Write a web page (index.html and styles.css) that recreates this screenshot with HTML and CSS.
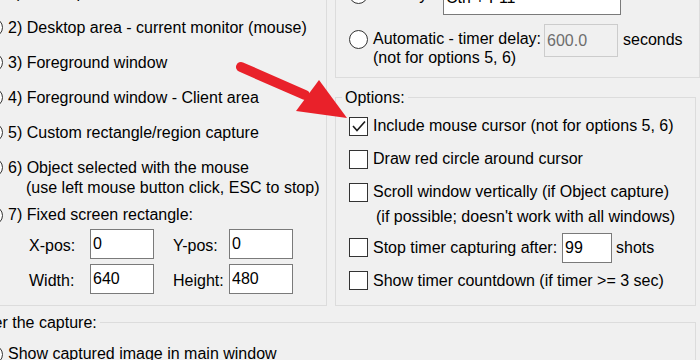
FILE: index.html
```html
<!DOCTYPE html>
<html lang="en">
<head>
  <meta charset="UTF-8" />
  <meta name="viewport" content="width=device-width, initial-scale=1.0">
  <title>Capture settings</title>
  <link rel="stylesheet" href="styles.css">
</head>
<body>
  <div class="dialog">
    <div class="top">
      <!-- Capture source -->
      <div class="group source">
        <div class="opt"><span class="radio"></span>1) Desktop area - all monitors</div>
        <div class="opt"><span class="radio"></span>2) Desktop area - current monitor (mouse)</div>
        <div class="opt"><span class="radio"></span>3) Foreground window</div>
        <div class="opt"><span class="radio"></span>4) Foreground window - Client area</div>
        <div class="opt"><span class="radio"></span>5) Custom rectangle/region capture</div>
        <div class="opt tall">
          <span class="radio"></span>
          <div>6) Object selected with the mouse<span class="cont">(use left mouse button click, ESC to stop)</span></div>
        </div>
        <div class="opt short"><span class="radio"></span>7) Fixed screen rectangle:</div>
        <div class="rect">
          <label>X-pos:</label><input class="field" value="0">
          <label class="y">Y-pos:</label><input class="field" value="0">
          <label>Width:</label><input class="field" value="640">
          <label class="y">Height:</label><input class="field" value="480">
        </div>
      </div>

      <div class="side">
        <!-- Capture trigger -->
        <div class="group trigger">
          <div class="hotkey">
            <span class="hk-choice"><span class="radio"></span><span class="hk-label">Hot key:</span></span>
            <input class="field hk-input" value="Ctrl + F11">
          </div>
          <div class="auto">
            <span class="radio"></span>
            <div class="desc">Automatic - timer delay:<br>(not for options 5, 6)</div>
            <input class="field delay" value="600.0" disabled>
            <span class="unit">seconds</span>
          </div>
        </div>

        <fieldset class="options">
          <legend>Options:</legend>
          <div class="check-row">
            <span class="box"><svg width="17" height="17" viewBox="0 0 17 17"><polyline points="3,8 7,12.5 15,3.5" fill="none" stroke="#1a1a1a" stroke-width="1.6"/></svg></span>
            Include mouse cursor (not for options 5, 6)
          </div>
          <div class="check-row"><span class="box"></span>Draw red circle around cursor</div>
          <div class="check-row"><span class="box"></span>Scroll window vertically (if Object capture)</div>
          <div class="note">(if possible; doesn't work with all windows)</div>
          <div class="check-row">
            <span class="box"></span>
            <span class="stop-label">Stop timer capturing after:</span>
            <input class="field shots" value="99">
            <span class="unit">shots</span>
          </div>
          <div class="check-row"><span class="box"></span>Show timer countdown (if timer &gt;= 3 sec)</div>
        </fieldset>
      </div>
    </div>

    <fieldset class="after">
      <legend>After the capture:</legend>
      <div class="opt"><span class="radio"></span>Show captured image in main window</div>
    </fieldset>
  </div>

  <svg class="arrow" width="700" height="360" viewBox="0 0 700 360">
    <line x1="241" y1="67" x2="305" y2="95" stroke="#e9212a" stroke-width="10" stroke-linecap="round"/>
    <polygon points="319,80 296,111 347,118" fill="#e9212a"/>
  </svg>
</body>
</html>
```

FILE: styles.css
```css
* {
  box-sizing: border-box;
}

body {
  margin: 0;
  height: 360px;
  overflow: hidden;
  position: relative;
  background: #f0f0f0;
  font-family: "Liberation Sans", Arial, sans-serif;
  font-size: 16px;
  color: #000;
}

/* the screenshot is a crop, so the dialog starts above and left of the view */
.dialog {
  width: 720px;
  margin: -40px 0 0 -20px;
}

.top {
  display: flex;
  align-items: flex-start;
  gap: 8px;
}

.group {
  border: 1px solid #dcdcdc;
}

fieldset {
  margin: 0;
  min-width: 0;
  border: 1px solid #dcdcdc;
}

legend {
  padding: 0 3px;
  margin-left: -7px;
  line-height: 20px;
}

.radio,
.box {
  flex: none;
  width: 19px;
  height: 19px;
  border: 1px solid #333;
  background: #fff;
}

.radio {
  border-radius: 50%;
}

.box svg {
  display: block;
}

.field {
  flex: none;
  height: 30px;
  padding: 0 2px;
  border: 1px solid #7a7a7a;
  background: #fff;
  font: inherit;
  color: #000;
  outline: none;
}

.unit {
  white-space: nowrap;
}

/* left column */
.source {
  width: 347px;
  padding: 14px 0 11px 3px;
}

.opt {
  display: flex;
  align-items: center;
  gap: 5px;
  height: 35px;
  line-height: 20px;
  white-space: nowrap;
}

.opt.tall {
  height: auto;
  align-items: flex-start;
  padding-top: 7.5px;
}

.opt.tall .radio {
  margin-top: 0.5px;
}

.cont {
  display: block;
  padding-left: 18px;
}

.opt.short {
  height: 27.5px;
  align-items: flex-end;
}

.rect {
  display: grid;
  grid-template-columns: 61px 64px 75px 64px;
  row-gap: 5px;
  align-items: center;
  margin: 4px 0 0 45px;
}

.rect label {
  padding-top: 3px;
}

.rect label.y {
  padding-left: 19px;
}

.rect .field {
  width: 64px;
}

/* right column */
.side {
  width: 365px;
}

.trigger {
  padding: 24px 0 10.5px 13px;
}

.hotkey {
  display: flex;
  align-items: center;
  height: 30px;
}

.hk-choice {
  display: flex;
  align-items: center;
  gap: 5px;
  margin-bottom: 11px;
  line-height: 19px;
}

.hk-label {
  width: 70px;
}

.hk-input {
  width: 178px;
  padding-bottom: 5px;
}

.auto {
  display: flex;
  align-items: flex-start;
  margin-top: 9px;
  line-height: 19px;
}

.auto .radio {
  margin-top: 5.5px;
}

.desc {
  width: 171px;
  margin: 4.5px 0 0 5px;
  white-space: nowrap;
}

.field.delay {
  width: 74px;
  height: 33px;
  border-color: #cccccc;
  background: #f0f0f0;
  color: #6d6d6d;
}

.auto .unit {
  margin: 5.5px 0 0 5px;
}

.options {
  width: 361px;
  margin-top: 9.5px;
  padding: 2px 0 8px 13px;
}

.check-row {
  display: flex;
  align-items: center;
  gap: 5px;
  height: 33px;
  line-height: 20px;
  white-space: nowrap;
}

.note {
  margin: -1.5px 0 4px 27px;
  line-height: 20px;
  white-space: nowrap;
}

.stop-label {
  width: 184px;
}

.field.shots {
  width: 50px;
}

.check-row .unit {
  margin-left: -1px;
}

.after {
  width: 716px;
  margin-top: 6.5px;
  padding: 4px 0 0 3px;
}

.after legend {
  margin-left: -13px;
}

.arrow {
  position: absolute;
  left: 0;
  top: 0;
  pointer-events: none;
}
```
